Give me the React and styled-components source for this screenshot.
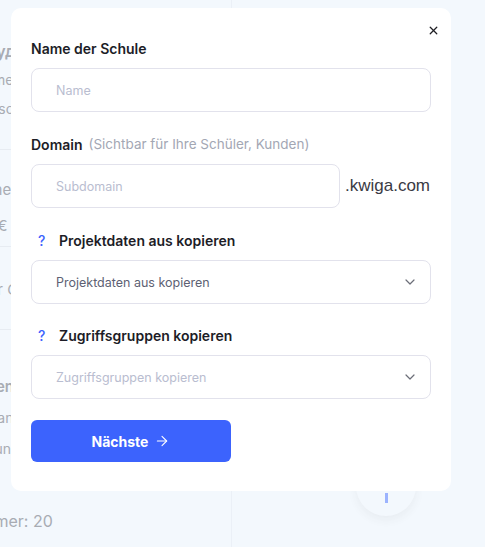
import React from "react";
import styled, { createGlobalStyle } from "styled-components";
import { X, ChevronDown, ArrowRight } from "lucide-react";

const Global = createGlobalStyle`
  html, body { margin: 0; padding: 0; }
  body {
    width: 485px;
    height: 547px;
    overflow: hidden;
    background: #f3f8fd;
    font-family: Inter, "Noto Sans", "Liberation Sans", sans-serif;
  }
  * { box-sizing: border-box; }
`;

const Page = styled.div`
  position: relative;
  width: 485px;
  height: 547px;
  overflow: hidden;
  background: #f3f8fd;
`;

/* ---------- faded page behind the modal ---------- */
const Backdrop = styled.div`
  display: flex;
  height: 100%;
  opacity: 0.75;
`;

const LeftCol = styled.div`
  width: 292px;
  margin-left: -60px;
  flex-shrink: 0;
  padding-top: 22px;
  border-right: 1px solid #e9eef5;
  display: flex;
  flex-direction: column;
`;

const Section = styled.div`
  padding: ${(p) => p.$pad || "20px 0 0 0"};
  height: ${(p) => p.$h}px;
  flex-shrink: 0;
  border-bottom: ${(p) => (p.$line ? "1px solid #e3e8ef" : "none")};
  display: flex;
  flex-direction: column;
  gap: ${(p) => p.$gap || 12}px;
`;

const BgText = styled.div`
  font-size: ${(p) => p.$size || 14}px;
  font-weight: ${(p) => p.$weight || 400};
  color: #8f939b;
  line-height: 18px;
  white-space: nowrap;
`;

const RightCol = styled.div`
  flex: 1;
  display: flex;
  flex-direction: column;
  align-items: center;
  padding-top: 456px;
  gap: 44px;
`;

const Circle = styled.div`
  width: 60px;
  height: 60px;
  flex-shrink: 0;
  border-radius: 50%;
  background: #f4f8fd;
  box-shadow: 0 4px 10px rgba(0, 0, 0, 0.06);
  display: flex;
  align-items: center;
  justify-content: center;
  margin-left: 40px;
`;

const Dot = styled.div`
  width: 3px;
  height: 10px;
  background: #7f9cff;
  margin-top: 24px;
`;

const BgTitle = styled.div`
  font-size: 20px;
  font-weight: 600;
  color: #cdd0d6;
  margin-left: 60px;
  white-space: nowrap;
`;

/* ---------- modal ---------- */
const Overlay = styled.div`
  position: absolute;
  inset: 0;
  padding: 8px 0 0 11px;
`;

const Modal = styled.div`
  position: relative;
  width: 440px;
  background: #ffffff;
  border-radius: 10px;
  padding: 30px 20px 29px;
  display: flex;
  flex-direction: column;
`;

const Close = styled.button`
  position: absolute;
  top: 14px;
  right: 10px;
  width: 16px;
  height: 16px;
  padding: 0;
  border: none;
  background: none;
  display: flex;
  align-items: center;
  justify-content: center;
  color: #1f1f24;
  cursor: pointer;
`;

const Field = styled.div`
  display: flex;
  flex-direction: column;
  gap: 10px;
  margin-bottom: ${(p) => p.$mb || 22}px;
`;

const Label = styled.div`
  display: flex;
  align-items: center;
  height: 20px;
  font-size: 14px;
  font-weight: 600;
  color: #1d1d27;
  white-space: nowrap;
`;

const Hint = styled.span`
  font-weight: 400;
  font-size: 13.5px;
  color: #a3a7b4;
  margin-left: 6px;
`;

const Help = styled.span`
  color: #3c63fd;
  font-weight: 500;
  font-size: 14px;
  width: 28px;
  padding-left: 7px;
`;

const Input = styled.div`
  height: 44px;
  width: ${(p) => p.$w || "100%"};
  border: 1px solid #e2e2ec;
  border-radius: 8px;
  padding: 0 12px 0 24px;
  display: flex;
  align-items: center;
  justify-content: space-between;
  font-size: 12.5px;
  color: ${(p) => (p.$filled ? "#5d6173" : "#b9bdd0")};
  background: #fff;
`;

const Row = styled.div`
  display: flex;
  align-items: center;
  gap: 5px;
`;

const Suffix = styled.span`
  font-size: 17px;
  color: #3a3a44;
  font-family: "Liberation Sans", Arial, sans-serif;
`;

const Chevron = styled(ChevronDown)`
  color: #6b6e78;
`;

const Button = styled.button`
  width: 200px;
  height: 42px;
  border: none;
  border-radius: 6px;
  background: #3c63fd;
  color: #fff;
  font-family: Inter, sans-serif;
  font-size: 14px;
  font-weight: 700;
  display: flex;
  align-items: center;
  justify-content: center;
  gap: 6px;
  cursor: pointer;
`;

export default function App() {
  return (
    <Page>
      <Global />
      <Backdrop>
        <LeftCol>
          <Section $h={128} $line $pad="20px 0 0 0" $gap={11}>
            <BgText $size={16} $weight={600}>Ваша будущая школа</BgText>
            <BgText>Schulname: Meine Schule</BgText>
            <BgText>Domain: school.kwiga.com</BgText>
          </Section>
          <Section $h={97} $line $pad="31px 0 0 0" $gap={18}>
            <BgText $size={15}>Tarifname: Basis</BgText>
            <BgText $size={15}>Preis: 0 €</BgText>
          </Section>
          <Section $h={83} $line $pad="34px 0 0 0">
            <BgText $size={15}>Speicher Größe</BgText>
          </Section>
          <Section $h={164} $pad="48px 0 0 0" $gap={13}>
            <BgText $size={15} $weight={600}>Kompetenzen</BgText>
            <BgText>Schulen anlegen mit</BgText>
            <BgText>Kunden und Mitarbeitern</BgText>
          </Section>
          <Section $h={40} $pad="18px 0 0 0">
            <BgText $size={16}>Teilnehmer: 20</BgText>
          </Section>
        </LeftCol>
        <RightCol>
          <Circle>
            <Dot />
          </Circle>
          <BgTitle>Eigene Schule kaufen</BgTitle>
        </RightCol>
      </Backdrop>

      <Overlay>
        <Modal>
          <Close aria-label="close">
            <X size={13} strokeWidth={2.4} />
          </Close>

          <Field>
            <Label>Name der Schule</Label>
            <Input>Name</Input>
          </Field>

          <Field>
            <Label>
              Domain<Hint>(Sichtbar für Ihre Schüler, Kunden)</Hint>
            </Label>
            <Row>
              <Input $w="309px">Subdomain</Input>
              <Suffix>.kwiga.com</Suffix>
            </Row>
          </Field>

          <Field $mb={21}>
            <Label>
              <Help>?</Help>Projektdaten aus kopieren
            </Label>
            <Input $filled>
              Projektdaten aus kopieren
              <Chevron size={16} strokeWidth={1.8} />
            </Input>
          </Field>

          <Field $mb={21}>
            <Label>
              <Help>?</Help>Zugriffsgruppen kopieren
            </Label>
            <Input>
              Zugriffsgruppen kopieren
              <Chevron size={16} strokeWidth={1.8} />
            </Input>
          </Field>

          <Button>
            Nächste
            <ArrowRight size={16} strokeWidth={1.6} />
          </Button>
        </Modal>
      </Overlay>
    </Page>
  );
}
